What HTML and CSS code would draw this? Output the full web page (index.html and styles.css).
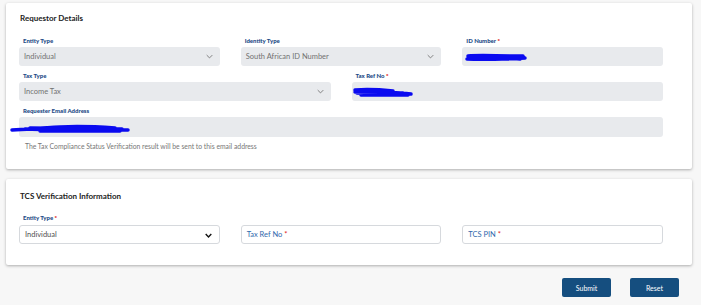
FILE: index.html
```html
<!DOCTYPE html>
<html lang="en">
<head>
    <meta charset="UTF-8">
    <title>Tax Compliance Status Verification</title>
    <link rel="stylesheet" href="styles.css">
</head>
<body>
    <div class="page">
        <div class="card card-requestor">
            <h2>Requestor Details</h2>
            <div class="row three">
                <div class="field">
                    <label>Entity Type</label>
                    <div class="control disabled"><span>Individual</span>
                        <svg class="chev" viewBox="0 0 10 6"><path d="M1 1 L5 5 L9 1"/></svg>
                    </div>
                </div>
                <div class="field">
                    <label>Identity Type</label>
                    <div class="control disabled"><span>South African ID Number</span>
                        <svg class="chev" viewBox="0 0 10 6"><path d="M1 1 L5 5 L9 1"/></svg>
                    </div>
                </div>
                <div class="field">
                    <label>ID Number <span class="req">*</span></label>
                    <div class="control disabled">
                        <svg class="scribble id-scribble" viewBox="0 0 62 9"><path d="M3 3 C15 2 30 3 58 3 M2 6 C20 7 40 6 60 5 M6 5 C25 4 45 5 55 6 M10 4 C30 5 45 4 57 4"/></svg>
                    </div>
                </div>
            </div>
            <div class="row two">
                <div class="field">
                    <label>Tax Type</label>
                    <div class="control disabled"><span>Income Tax</span>
                        <svg class="chev" viewBox="0 0 10 6"><path d="M1 1 L5 5 L9 1"/></svg>
                    </div>
                </div>
                <div class="field">
                    <label>Tax Ref No <span class="req">*</span></label>
                    <div class="control disabled">
                        <svg class="scribble tax-scribble" viewBox="0 0 60 10"><path d="M2 3 C15 2 30 3 40 4 M2 5 C20 5 40 5 58 7 M8 8 C25 8 40 8 55 8 M4 6 C20 7 35 6 50 6"/></svg>
                    </div>
                </div>
            </div>
            <div class="row one">
                <div class="field">
                    <label>Requester Email Address</label>
                    <div class="control disabled tall">
                        <svg class="scribble email-scribble" viewBox="0 0 120 9"><path d="M2 6 C20 5 30 4 50 3 C70 2 90 3 105 4 M15 5 C40 6 70 6 118 6 M30 7 C60 7 90 7 110 7 M20 4 C45 4 80 5 112 5"/></svg>
                    </div>
                </div>
            </div>
            <p class="hint">The Tax Compliance Status Verification result will be sent to this email address</p>
        </div>

        <div class="card card-tcs">
            <h2>TCS Verification Information</h2>
            <div class="row three">
                <div class="field">
                    <label>Entity Type <span class="req">*</span></label>
                    <div class="control open"><span>Individual</span>
                        <svg class="chev dark" viewBox="0 0 10 6"><path d="M1 1 L5 5 L9 1"/></svg>
                    </div>
                </div>
                <div class="field">
                    <label class="blank">&nbsp;</label>
                    <div class="control open placeholder"><span>Tax Ref No <span class="req">*</span></span></div>
                </div>
                <div class="field">
                    <label class="blank">&nbsp;</label>
                    <div class="control open placeholder"><span>TCS PIN <span class="req">*</span></span></div>
                </div>
            </div>
        </div>

        <div class="actions">
            <button class="btn">Submit</button>
            <button class="btn">Reset</button>
        </div>
    </div>
</body>
</html>
```

FILE: styles.css
```css
body {
    margin: 0;
    background-color: #f7f7f7;
    font-family: Lato, "Open Sans", sans-serif;
    color: #333;
}

.page {
    padding: 3px 9px 0 6px;
}

.card {
    background-color: #fff;
    border-radius: 2px;
    box-shadow: 0 1px 3px rgba(0, 0, 0, 0.3);
    padding: 10px 29px 19px 13px;
}

.card-tcs {
    margin-top: 10px;
    padding-top: 12px;
    padding-bottom: 21px;
}

h2 {
    margin: 0 0 14px 1px;
    font-size: 8px;
    line-height: 10px;
    font-weight: 700;
    color: #222;
}

.card-tcs h2 {
    margin-bottom: 13px;
}

.row {
    display: grid;
    column-gap: 21px;
    margin-bottom: 6px;
}

.row.three { grid-template-columns: 1fr 1fr 1fr; }
.row.two { grid-template-columns: 1fr 1fr; }
.row.one { grid-template-columns: 1fr; margin-bottom: 0; }
.card-tcs .row { margin-bottom: 0; }

label {
    display: block;
    margin: 0 0 2px 4px;
    font-size: 6px;
    line-height: 8px;
    font-weight: 900;
    color: #1c4a86;
}

.card-tcs label {
    margin-bottom: 3px;
}

.req {
    color: #e02424;
}

.control {
    position: relative;
    display: flex;
    align-items: center;
    height: 19px;
    padding: 0 5px;
    border-radius: 3px;
    font-size: 7.5px;
    box-sizing: border-box;
}

.control.tall {
    height: 20px;
}

.control.disabled {
    background-color: #e8eaed;
    color: #727272;
}

.control.open {
    background-color: #fff;
    border: 1px solid #d6d9dd;
    color: #505050;
}

.control.placeholder {
    color: #2f68ac;
}

.chev {
    position: absolute;
    right: 7px;
    top: 7px;
    width: 7px;
    height: 5px;
    fill: none;
    stroke: #777;
    stroke-width: 1.3;
}

.chev.dark {
    stroke: #111;
    stroke-width: 2;
}

.scribble {
    position: absolute;
    fill: none;
    stroke: #0a0af0;
    stroke-width: 3.5;
    stroke-linecap: round;
}

.id-scribble { left: 3px; top: 6px; width: 62px; height: 9px; }
.tax-scribble { left: 1px; top: 5px; width: 60px; height: 10px; }
.email-scribble { left: -9px; top: 7px; width: 120px; height: 9px; }

.hint {
    margin: 5px 0 0 6px;
    font-size: 6.8px;
    line-height: 8px;
    color: #777;
}

.actions {
    display: flex;
    justify-content: flex-end;
    gap: 19px;
    padding: 13px 13px 0 0;
}

.btn {
    width: 49px;
    height: 19px;
    padding: 0;
    border: none;
    border-radius: 2px;
    background-color: #154e7f;
    color: #fff;
    font-family: Lato, "Open Sans", sans-serif;
    font-size: 7px;
}
```
